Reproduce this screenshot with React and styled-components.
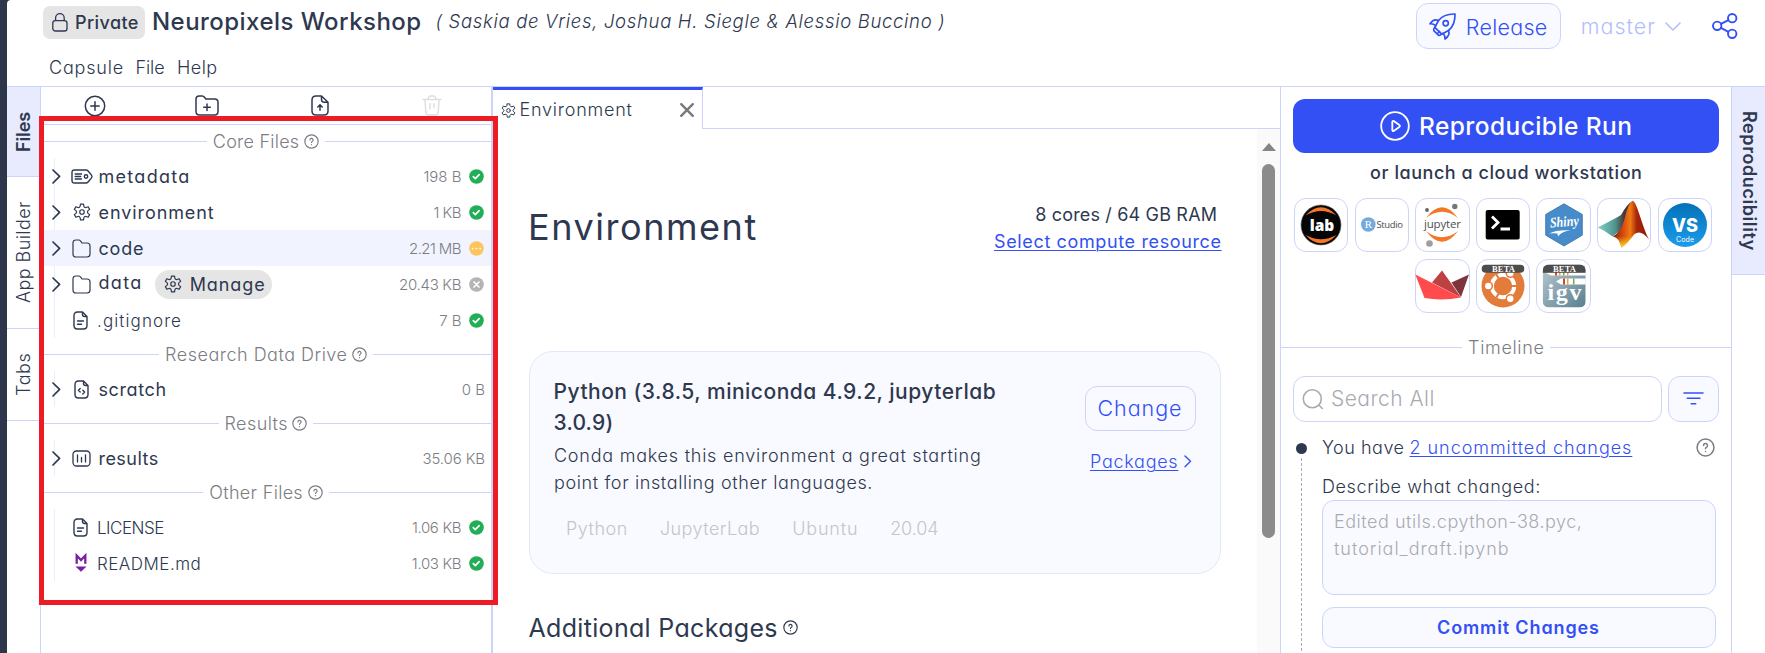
import React from 'react';
import styled, { createGlobalStyle, css } from 'styled-components';

const c = {
  ink: '#2e384f',
  grey: '#7b7d83',
  faint: '#a9abb1',
  blue: '#3350f5',
  line: '#cdd4fb',
  tint: '#f9faff',
  tab: '#e8eafe',
  pill: '#e5e5e5',
  green: '#22ad57',
};

const GlobalStyle = createGlobalStyle`
  *, *::before, *::after { box-sizing: border-box; }
  body {
    margin: 0;
    overflow: hidden;
    background: #fff;
    color: ${c.ink};
    font-family: Inter, "Open Sans", sans-serif;
    font-feature-settings: "cv11";
    font-size: 18px;
    font-weight: 350;
  }
  svg { display: block; flex: none; overflow: visible; }
`;

/* Text with its own tracking; the trailing space is taken back by the margin. */
const Text = styled.span`
  white-space: nowrap;
  letter-spacing: ${(p) => p.$ls || 0}px;
  margin-right: ${(p) => -(p.$ls || 0)}px;
`;

/* ---------- icons ---------- */

const Stroke = styled.svg`
  fill: none;
  stroke: ${(p) => p.$color || c.ink};
  stroke-width: ${(p) => p.$weight || 1.4};
  stroke-linecap: round;
  stroke-linejoin: round;
`;

const gearPath = (() => {
  const pt = (r, deg) => {
    const a = ((deg - 90) * Math.PI) / 180;
    return `${(12 + r * Math.cos(a)).toFixed(2)} ${(12 + r * Math.sin(a)).toFixed(2)}`;
  };
  let d = '';
  for (let k = 0; k < 6; k += 1) {
    const a = k * 60;
    d += `${k ? 'L' : 'M'}${pt(10.8, a - 11)}L${pt(10.8, a + 11)}L${pt(8.2, a + 17)}Q${pt(6.4, a + 30)} ${pt(8.2, a + 43)}`;
  }
  return `${d}Z`;
})();

const Gear = ({ size = 18, weight = 1.6 }) => (
  <Stroke width={size} height={size} viewBox="0 0 24 24" $weight={weight}>
    <path d={gearPath} />
    <circle cx="12" cy="12" r="3" />
  </Stroke>
);

const Help = ({ size = 15, color = c.grey }) => (
  <Stroke width={size} height={size} viewBox="0 0 18 18" $color={color} $weight={1.4}>
    <circle cx="9" cy="9" r="8" />
    <path d="M7.1 7.2a1.9 1.9 0 1 1 2.7 1.7c-.6.3-.8.6-.8 1.3M9 12.7v.1" />
  </Stroke>
);

const Lock = () => (
  <Stroke width="16" height="19" viewBox="0 0 16 19" $weight={1.3}>
    <rect x=".8" y="7.6" width="14.2" height="10.4" rx="2.6" />
    <path d="M3.6 7.4V5a4.3 4.3 0 0 1 8.6 0v2.4" />
  </Stroke>
);

const Chevron = () => (
  <Stroke width="9" height="15" viewBox="0 0 9 15" $weight={1.7}>
    <path d="M1 1l6.6 6.3L1 14" />
  </Stroke>
);

const PlusCircle = () => (
  <Stroke width="22" height="22" viewBox="0 0 22 22" $weight={1.5}>
    <circle cx="11" cy="11" r="9.7" />
    <path d="M11 6.8v8.4M6.8 11h8.4" />
  </Stroke>
);

const FolderPlus = () => (
  <Stroke width="24" height="21" viewBox="0 0 24 21" $weight={1.5}>
    <path d="M1 4.2C1 2 2.2 1 4.2 1h3c1 0 1.7.5 2.3 1.3L10.8 4h8.7C21.8 4 23 5.2 23 7.3v9.2C23 18.8 21.8 20 19.5 20h-15C2.2 20 1 18.8 1 16.5zM12 9v6.6M8.7 12.3h6.6" />
  </Stroke>
);

const FileUp = () => (
  <Stroke width="18" height="21" viewBox="0 0 18 21" $weight={1.5}>
    <path d="M10.5 1H5C2.3 1 1 2.3 1 5v11c0 2.7 1.3 4 4 4h8c2.7 0 4-1.3 4-4V7.2zM10.5 1v3.5c0 2 .7 2.7 2.7 2.7H17M9 15.3V10M6.8 12L9 9.8l2.2 2.2" />
  </Stroke>
);

const Trash = () => (
  <Stroke width="20" height="21" viewBox="0 0 20 21" $color="#dedfe3" $weight={1.5}>
    <path d="M1 4.5h18M6 4.2C6.3 2 7 1 8.5 1h3C13 1 13.7 2 14 4.2M3 4.7l.8 12c.1 2.2 1 3.3 3 3.3h6.4c2 0 2.9-1.1 3-3.3l.8-12M8 8.7v5M12 8.7v3.5" />
  </Stroke>
);

const Tag = () => (
  <Stroke width="22" height="15" viewBox="0 0 22 15" $weight={1.4}>
    <path d="M3.5 1h11.3c1 0 1.7.3 2.3 1l3.4 4.1c.7.9.7 1.9 0 2.8L17.1 13c-.6.7-1.3 1-2.3 1H3.5C1.8 14 1 13.2 1 11.5v-8C1 1.8 1.8 1 3.5 1zM4.2 5h6.3M4.2 7.5h5.5M4.2 10h6.3" />
    <circle cx="15" cy="7.5" r="1.7" />
  </Stroke>
);

const Folder = () => (
  <Stroke width="19" height="19" viewBox="0 0 19 19" $weight={1.2}>
    <path d="M1 4c0-2 1-3 3-3h2.6c1 0 1.6.4 2.1 1.2L10 4h5c2 0 3 1 3 3v8c0 2-1 3-3 3H4c-2 0-3-1-3-3z" />
  </Stroke>
);

const fileOutline = 'M9.5 1h-5C2.2 1 1 2.2 1 4.5v10C1 16.8 2.2 18 4.5 18h6c2.3 0 3.5-1.2 3.5-3.5v-9zM9.5 1v2.5c0 1.5.5 2 2 2H14';

const FileText = () => (
  <Stroke width="15" height="19" viewBox="0 0 15 19" $weight={1.4}>
    <path d={`${fileOutline}M4.5 10h6M4.5 13.3h4`} />
  </Stroke>
);

const FileCode = () => (
  <Stroke width="15" height="19" viewBox="0 0 15 19" $weight={1.4}>
    <path d={`${fileOutline}M6.2 8.5L4.4 10.3l1.8 1.8M8.8 10.3l1.8 1.8-1.8 1.8`} />
  </Stroke>
);

const BarsBox = () => (
  <Stroke width="19" height="17" viewBox="0 0 19 17" $weight={1.3}>
    <rect x="1" y="1" width="17" height="15" rx="3.5" />
    <path d="M5.5 4.8V12M9.5 7.5V12M13.5 4.8V12" />
  </Stroke>
);

const Markdown = () => (
  <svg width="12" height="18" viewBox="0 0 12 18">
    <path d="M1.7 9.8V1.5L6 6l4.3-4.500V9.8" fill="none" stroke="#7b1fa2" strokeWidth="2.3" />
    <path d="M.5 12.5h11L6 17.8z" fill="#7b1fa2" />
  </svg>
);

const statusColor = { ok: c.green, pending: '#fdc55f', ignored: '#b4b4b4' };
const statusPath = {
  ok: 'M4.3 7.7l2 2 3.9-4',
  pending: 'M3.6 7.5h.1M7.4 7.5h.1M11.2 7.5h.1',
  ignored: 'M5 5l5 5M10 5l-5 5',
};
const Status = ({ kind }) => (
  <svg width="15" height="15" viewBox="0 0 15 15">
    <circle cx="7.5" cy="7.5" r="7.3" fill={statusColor[kind]} />
    <path d={statusPath[kind]} fill="none" stroke="#fff" strokeWidth="1.7" strokeLinecap="round" strokeLinejoin="round" />
  </svg>
);

const Rocket = () => (
  <Stroke width="27" height="27" viewBox="0 0 27 27" $color={c.blue} $weight={1.7}>
    <path d="M9.5 7.5C13.5 2.5 19 .8 26 1c.2 7-1.5 12.5-6.5 16.5l-6.8 3.7-6.9-6.9z" />
    <circle cx="16.7" cy="10.3" r="2.6" />
    <path d="M9.5 7.5C6 6 3.8 6.8 1 10.8c2-.3 3.8.2 5.8 1.9M19.5 17.5c1.3 3.2.5 5.7-3.5 8.5.3-2-.2-3.8-1.9-5.8M5.8 14.3c-.9 1-1.5 2.3-1 3.3M9 20l1.5-1.5M12.7 21.2c-1 .9-2.3 1.5-3.3 1l-4.6-4.6" />
  </Stroke>
);

const ChevronDown = () => (
  <Stroke width="16" height="9" viewBox="0 0 16 9" $color="#b3befb" $weight={1.6}>
    <path d="M1 1l7 7 7-7" />
  </Stroke>
);

const Share = () => (
  <Stroke width="26" height="26" viewBox="0 0 26 26" $color={c.blue} $weight={1.9}>
    <circle cx="5.2" cy="12.8" r="4.2" />
    <circle cx="20.2" cy="5.2" r="4.2" />
    <circle cx="20.2" cy="20.8" r="4.2" />
    <path d="M9 10.9l7.4-3.7M9 14.8l7.4 4" />
  </Stroke>
);

const Close = () => (
  <Stroke width="14" height="14" viewBox="0 0 14 14" $color="#77797f" $weight={2.4}>
    <path d="M1.2 1.2l11.6 11.6M12.8 1.2L1.2 12.8" />
  </Stroke>
);

const Play = () => (
  <Stroke width="30" height="30" viewBox="0 0 30 30" $color="#fff" $weight={1.8}>
    <circle cx="15" cy="15" r="13.8" />
    <path d="M12.3 10.9v8.2c0 .9.7 1.2 1.4.8l5.6-4c.8-.5.8-1.3 0-1.8l-5.6-4c-.7-.4-1.4-.1-1.4.8z" />
  </Stroke>
);

const Search = () => (
  <Stroke width="22" height="22" viewBox="0 0 22 22" $color={c.faint} $weight={1.6}>
    <circle cx="10.3" cy="10.8" r="9" />
    <path d="M17.3 17.5l3 3" />
  </Stroke>
);

const Filter = () => (
  <Stroke width="21" height="13" viewBox="0 0 21 13" $color={c.blue} $weight={1.6}>
    <path d="M1 1h19M4.3 6.3h12.6M8.3 11.7h4.4" />
  </Stroke>
);

const SmallChevron = () => (
  <Stroke width="8" height="13" viewBox="0 0 8 13" $color={c.blue} $weight={1.4}>
    <path d="M1 1l5.5 5.3L1 11.8" />
  </Stroke>
);

/* ---------- workstation logos ---------- */

const Logo = ({ children }) => (
  <svg width="54" height="54" viewBox="0 0 54 54">{children}</svg>
);

const LabLogo = () => (
  <Logo>
    <circle cx="27" cy="27" r="20" fill="#060606" stroke="#666" strokeWidth=".6" />
    <path d="M11.5 17.5Q27 1 42.5 17.5Q27 8.5 11.5 17.5zM11.5 37Q27 53.5 42.5 37Q27 45.5 11.5 37z" fill="#f37726" />
    <text x="28" y="32.5" textAnchor="middle" fontFamily="Open Sans, sans-serif" fontWeight="800" fontSize="15.5" fill="#fff">lab</text>
  </Logo>
);

const RStudioLogo = () => (
  <Logo>
    <circle cx="13.3" cy="26.5" r="7.3" fill="#75aadb" />
    <text x="13.3" y="30.2" textAnchor="middle" fontFamily="Liberation Serif, serif" fontSize="11" fill="#fff">R</text>
    <text x="21.5" y="30.2" textLength="26.5" fontFamily="Open Sans, sans-serif" fontWeight="400" fontSize="9.5" fill="#4d4d4d">Studio</text>
  </Logo>
);

const JupyterLogo = () => (
  <Logo>
    <path d="M11 20Q27-1.5 43 20Q27 7.5 11 20zM11 33Q27 54.5 43 33Q27 45.5 11 33z" fill="#f37726" />
    <circle cx="12" cy="12" r="1.9" fill="#616262" />
    <circle cx="39.8" cy="8.5" r="2.7" fill="#767677" />
    <circle cx="14.5" cy="45.5" r="3.3" fill="#9e9e9e" />
    <text x="9" y="30" textLength="37" fontFamily="Open Sans, sans-serif" fontWeight="400" fontSize="11.5" fill="#4e4e4e">jupyter</text>
  </Logo>
);

const TerminalLogo = () => (
  <Logo>
    <rect x="9.7" y="12" width="34" height="29.5" rx="2" fill="#000" />
    <path d="M16 18.5l6 6-6 6M24.5 31h9.5" fill="none" stroke="#fff" strokeWidth="2.8" />
  </Logo>
);

const ShinyLogo = () => (
  <Logo>
    <path d="M27 5.8L45.3 16.4V37.2L27 48L8.7 37.2V16.4z" fill="#478cca" stroke="#3a6fa3" strokeWidth=".8" />
    <text x="27.5" y="28.5" textAnchor="middle" transform="rotate(-4 27 27)" textLength="29" lengthAdjust="spacingAndGlyphs" fontFamily="Liberation Serif, serif" fontStyle="italic" fontWeight="700" fontSize="14.5" fill="#fff">Shiny</text>
    <path d="M12.5 35.5Q20 31.5 34 32.5Q25 33 21 38.5L20.5 35.5Q17 34.8 12.5 35.5z" fill="#fff" />
  </Logo>
);

const MatlabLogo = () => (
  <Logo>
    <defs>
      <linearGradient id="mlFront" x1="0" y1="0" x2="1" y2="0">
        <stop offset="0" stopColor="#7a1d0c" />
        <stop offset=".28" stopColor="#d9480f" />
        <stop offset=".48" stopColor="#f07c13" />
        <stop offset=".66" stopColor="#a8260a" />
        <stop offset="1" stopColor="#8a1a08" />
      </linearGradient>
      <linearGradient id="mlGlow" x1="0" y1="0" x2="0" y2="1">
        <stop offset=".6" stopColor="#ffe21a" stopOpacity="0" />
        <stop offset="1" stopColor="#ffe21a" />
      </linearGradient>
      <linearGradient id="mlBack" x1="0" y1="0" x2="1" y2="0">
        <stop offset="0" stopColor="#84d2c5" />
        <stop offset=".5" stopColor="#4f938e" />
        <stop offset=".75" stopColor="#473636" />
      </linearGradient>
    </defs>
    <path d="M.8 29.5L16 21.5Q20 19.5 24 17Q30 6 36 2.8L28 29L15.5 38.5Q8 32.5 .8 29.5z" fill="url(#mlBack)" />
    <path d="M16 38.5Q24 34 27.5 21Q31 5 35.8 2.8C40 4 45 28 52 41.5Q44 31 37.5 36Q30 46 24.5 49.5Q21.5 39 16 38.5z" fill="url(#mlFront)" />
    <path d="M16 38.5Q24 34 27.5 21L35 24L37.5 36Q30 46 24.5 49.5Q21.5 39 16 38.5z" fill="url(#mlGlow)" />
  </Logo>
);

const VSCodeLogo = () => (
  <Logo>
    <defs>
      <linearGradient id="vs" x1="0" y1="0" x2="0" y2="1">
        <stop offset="0" stopColor="#0471b9" />
        <stop offset="1" stopColor="#1c9cea" />
      </linearGradient>
    </defs>
    <circle cx="27" cy="27" r="22" fill="url(#vs)" />
    <text x="27" y="33.5" textAnchor="middle" textLength="26" lengthAdjust="spacingAndGlyphs" fontWeight="800" fontSize="19" fill="#fff">VS</text>
    <text x="27" y="43.5" textAnchor="middle" textLength="18" fontSize="7" fontWeight="400" fill="#fff">Code</text>
  </Logo>
);

const StreamlitLogo = () => (
  <Logo>
    <path d="M27 11.5L37 25.5L46 38.5L17 23.5z" fill="#bd4043" />
    <path d="M54 15.5L46 38L36.5 23.5z" fill="#7d353b" />
    <path d="M.3 15.5L46 38.5Q27 42 9.5 39z" fill="#ff4b4b" />
  </Logo>
);

const UbuntuLogo = () => (
  <Logo>
    <circle cx="27" cy="27" r="21.5" fill="#e37b3b" />
    <circle cx="27" cy="27" r="11.2" fill="none" stroke="#fff" strokeWidth="4" />
    <path d="M27 27l17 0M27 27L18.5 12.3M27 27L18.5 41.7" stroke="#e37b3b" strokeWidth="2" />
    <circle cx="27" cy="27" r="8" fill="#e37b3b" />
    <g fill="#fff" stroke="#e37b3b" strokeWidth="1.6">
      <circle cx="12.3" cy="27" r="4" />
      <circle cx="34.3" cy="14.3" r="4" />
      <circle cx="34.3" cy="39.7" r="4" />
    </g>
    <rect x="5.7" y="5.7" width="42.6" height="8" rx="4" fill="#4c4c4c" />
    <text x="27.5" y="12.8" textAnchor="middle" textLength="23" fontFamily="Liberation Serif, serif" fontWeight="700" fontSize="8.5" fill="#fff">BETA</text>
  </Logo>
);

const IgvLogo = () => (
  <Logo>
    <defs>
      <linearGradient id="igv" x1="0" y1="0" x2="1" y2="1">
        <stop offset="0" stopColor="#b9c9d0" />
        <stop offset="1" stopColor="#587f91" />
      </linearGradient>
      <clipPath id="igvBox"><rect x="5.7" y="5.5" width="43" height="43" rx="6" /></clipPath>
    </defs>
    <g clipPath="url(#igvBox)">
      <rect x="5.7" y="5.5" width="43" height="43" fill="url(#igv)" />
      <path d="M9 14l5 2.5h35v-4H12zM19 22.5l5-3h25v6H24z" fill="#fff" />
      <path d="M18 13h2v3.5h-2zM26 19.5h2v6h-2z" fill="#d9432f" />
      <path d="M22 13h1.5v3.5H22zM30 13h1.5v3.5H30zM30 19.5h1.5v6H30z" fill="#e9a33b" />
      <path d="M26 13h1.5v3.5H26zM36 19.5h1.5v6H36z" fill="#72a84e" />
      <rect x="5.7" y="5.5" width="43" height="8.3" fill="#4c4c4c" />
    </g>
    <text x="27.5" y="12.8" textAnchor="middle" textLength="23" fontFamily="Liberation Serif, serif" fontWeight="700" fontSize="8.5" fill="#fff">BETA</text>
    <text x="27.5" y="41" textAnchor="middle" textLength="34" fontFamily="Liberation Serif, serif" fontWeight="700" fontSize="24" fill="#fff">igv</text>
  </Logo>
);

/* ---------- frame ---------- */

const Window = styled.div`
  position: relative;
  display: flex;
  width: 1765px;
  height: 653px;
  overflow: hidden;
  background: #2e364b;
`;

const Page = styled.div`
  flex: 1;
  display: flex;
  flex-direction: column;
  margin-left: 7px;
  background: #fff;
  border-top-left-radius: 4px;
`;

const Header = styled.header`
  display: flex;
  justify-content: space-between;
  height: 87px;
  padding: 0 27px 0 36px;
  border-bottom: 1px solid ${c.line};
`;

const HeaderLeft = styled.div`
  display: flex;
  flex-direction: column;
`;

const TitleRow = styled.div`
  display: flex;
  align-items: center;
  height: 33px;
  margin-top: 6px;
`;

const PrivateBadge = styled.div`
  display: flex;
  align-items: center;
  gap: 7px;
  width: 102px;
  height: 33px;
  padding-left: 9px;
  border-radius: 7px;
  background: ${c.pill};
  font-weight: 500;
`;

const Title = styled.h1`
  margin: 0 0 2px 7px;
  font-size: 24px;
  font-weight: 500;
  line-height: 30px;
`;

const Authors = styled.div`
  margin: -3px 0 0 14.5px;
  font-size: 18.5px;
  font-style: italic;
`;

const MenuBar = styled.nav`
  display: flex;
  gap: 12.5px;
  padding: 17.5px 0 0 6px;
  line-height: 22px;
`;

const HeaderActions = styled.div`
  display: flex;
  align-items: flex-start;
  font-size: 21.5px;
`;

const ReleaseButton = styled.button`
  display: flex;
  align-items: center;
  gap: 10px;
  width: 145px;
  height: 46px;
  margin-top: 3px;
  padding: 1px 0 0 12px;
  border: 1px solid ${c.line};
  border-radius: 12px;
  background: ${c.tint};
  color: ${c.blue};
  font: inherit;
`;

const Branch = styled.div`
  display: flex;
  align-items: center;
  gap: 10px;
  height: 52px;
  margin-left: 20px;
  color: #b3befb;
`;

const ShareButton = styled.div`
  margin: 13px 0 0 31px;
`;

const Body = styled.div`
  flex: 1;
  display: flex;
  min-height: 0;
`;

/* ---------- side tabs ---------- */

const Rail = styled.div`
  display: flex;
  flex-direction: column;
  flex: none;
  width: 34px;
  ${(p) => (p.$right
    ? css`border-left: 1px solid ${c.line};`
    : css`border-right: 1px solid ${c.line};`)}
`;

const RailTab = styled.div`
  display: flex;
  align-items: center;
  justify-content: center;
  height: ${(p) => p.$h}px;
  border-bottom: 1px solid ${c.line};
  writing-mode: vertical-rl;
  transform: ${(p) => (p.$flip ? 'rotate(180deg)' : 'none')};
  ${(p) => p.$flip && css`border-bottom: 0; border-top: 1px solid ${c.line};`}
  background: ${(p) => (p.$active ? c.tab : 'transparent')};
  font-weight: ${(p) => (p.$active ? 580 : 350)};
`;

const RailText = styled.span`
  white-space: nowrap;
  letter-spacing: ${(p) => p.$ls}px;
  line-height: 24px;
`;

/* ---------- file panel ---------- */

const FilePanel = styled.aside`
  flex: none;
  width: 452px;
  border-right: 2px solid ${c.line};
`;

const Toolbar = styled.div`
  display: grid;
  grid-template-columns: 107px 117px 110px 114px;
  place-items: center;
  height: 38px;
  border-bottom: 1px solid ${c.line};
`;

const ToolSlot = styled.div`
  display: flex;
`;

const Divider = styled.div`
  display: flex;
  align-items: center;
  gap: 6px;
  height: 33px;
  color: ${c.grey};
  &::before, &::after {
    content: '';
    flex: 1;
    height: 1px;
    background: ${c.line};
  }
`;

const DividerLabel = styled.div`
  display: flex;
  align-items: center;
  gap: 5px;
`;

const Tree = styled.div`
  display: flex;
  flex-direction: column;
  background: linear-gradient(#ecedfa, #ecedfa) 13px 0 / 1px 100% no-repeat;
`;

const Row = styled.div`
  display: flex;
  align-items: center;
  height: 36px;
  padding-left: 11px;
  padding-right: ${(p) => (p.$tracked ? 7.5 : 6)}px;
  background: ${(p) => (p.$selected ? '#f1f4fe' : 'transparent')};
`;

const Arrow = styled.div`
  width: 9px;
`;

const FileIcon = styled.div`
  display: flex;
  justify-content: center;
  width: 22px;
  margin-left: ${(p) => (p.$folder ? 9.5 : 8.5)}px;
`;

const FileName = styled(Text)`
  margin-left: ${(p) => (p.$folder ? 6 : 5.5)}px;
  padding-top: 1px;
  font-weight: ${(p) => (p.$folder ? 430 : 350)};
  font-size: ${(p) => (p.$folder ? 18 : 17)}px;
  ${(p) => p.$raised && css`padding: 0 0 3px;`}
`;

const FileSize = styled(Text)`
  margin-left: auto;
  font-size: 15px;
  color: ${c.grey};
`;

const StatusSlot = styled.div`
  margin-left: 7px;
`;

const ManageButton = styled.div`
  display: flex;
  align-items: center;
  gap: 8px;
  width: 117px;
  height: 29px;
  margin-left: 13.5px;
  padding-left: 9px;
  border-radius: 15px;
  background: ${c.pill};
  font-weight: 400;
`;

const Highlight = styled.div`
  position: absolute;
  left: 39px;
  top: 116px;
  width: 459px;
  height: 489px;
  border: 5px solid #ed1c24;
`;

/* ---------- editor ---------- */

const Editor = styled.main`
  flex: 1;
  display: flex;
  flex-direction: column;
  min-width: 0;
`;

const TabStrip = styled.div`
  display: flex;
  height: 42px;
  &::after {
    content: '';
    flex: 1;
    border-bottom: 1px solid ${c.line};
  }
`;

const Tab = styled.div`
  display: flex;
  align-items: center;
  width: 210px;
  padding: 1px 8px 0 8px;
  border-top: 3px solid ${c.blue};
  border-right: 1px solid ${c.line};
`;

const TabName = styled(Text)`
  flex: 1;
  margin-left: 3.5px;
  padding-bottom: 1px;
`;

const EditorBody = styled.div`
  flex: 1;
  display: flex;
  min-height: 0;
`;

const Content = styled.div`
  flex: 1;
  padding: 72px 36px 0;
`;

const ContentHead = styled.div`
  display: flex;
  justify-content: space-between;
  height: 150px;
`;

const Heading = styled.h2`
  margin: 4px 0 0 -1px;
  font-size: 36px;
  font-weight: 430;
  line-height: 44px;
`;

const Compute = styled.div`
  display: flex;
  flex-direction: column;
  align-items: flex-end;
  font-weight: 400;
  line-height: 27px;
`;

const ComputeSpec = styled(Text)`
  padding-right: 4px;
`;

const Link = styled(Text)`
  color: ${c.blue};
  text-decoration: underline;
  text-decoration-thickness: 1px;
  text-underline-offset: 2px;
`;

const Card = styled.section`
  display: flex;
  justify-content: space-between;
  height: 223px;
  padding: 25px 24px 0;
  border: 1px solid #e3e7fc;
  border-radius: 24px;
  background: ${c.tint};
`;

const CardInfo = styled.div`
  display: flex;
  flex-direction: column;
  align-items: flex-start;
`;

const CardTitle = styled(Text)`
  margin-left: -0.5px;
  font-size: 21px;
  font-weight: 530;
  line-height: 30.5px;
`;

const CardText = styled(Text)`
  line-height: 27px;
`;

const Description = styled.div`
  display: flex;
  flex-direction: column;
  align-items: flex-start;
  margin-top: 4px;
`;

const Tags = styled.div`
  display: flex;
  gap: 32.5px;
  margin: 19px 0 0 12px;
  color: #c3c5ca;
  line-height: 27px;
`;

const CardActions = styled.div`
  display: flex;
  flex-direction: column;
  align-items: flex-start;
  width: 111px;
  padding-top: 9px;
`;

const ChangeButton = styled.button`
  width: 111px;
  height: 45px;
  padding: 0 2px 1px 0;
  border: 1px solid ${c.line};
  border-radius: 12px;
  background: ${c.tint};
  color: ${c.blue};
  font: inherit;
  font-size: 21.5px;
`;

const PackagesLink = styled.div`
  display: flex;
  align-items: center;
  gap: 6.5px;
  margin: 20px 0 0 5px;
`;

const Section = styled.h3`
  display: flex;
  align-items: center;
  gap: 5.5px;
  margin: 36.5px 0 0 -0.5px;
  font-size: 25px;
  font-weight: 400;
  line-height: 34px;
`;

const ScrollTrack = styled.div`
  display: flex;
  flex-direction: column;
  align-items: center;
  gap: 13px;
  width: 23px;
  padding-top: 14px;
  background: #fafafa;
`;

const ScrollArrow = styled.div`
  border: 7px solid transparent;
  border-top: 0;
  border-bottom: 8px solid #858585;
`;

const ScrollThumb = styled.div`
  width: 13px;
  height: 374px;
  border-radius: 7px;
  background: #8b8b8b;
`;

/* ---------- reproducibility panel ---------- */

const RunPanel = styled.aside`
  flex: none;
  display: flex;
  flex-direction: column;
  width: 451px;
  padding-top: 12px;
  border-left: 1px solid ${c.line};
`;

const RunButton = styled.button`
  display: flex;
  align-items: center;
  justify-content: center;
  gap: 9px;
  flex: none;
  height: 54px;
  margin: 0 12px;
  padding: 0 6px 1px;
  border: 0;
  border-radius: 12px;
  background: ${c.blue};
  color: #fff;
  font: inherit;
  font-size: 24.5px;
  font-weight: 500;
`;

const Launch = styled.div`
  display: flex;
  justify-content: center;
  padding: 8px 0 14px;
  line-height: 23px;
  font-weight: 500;
`;

const Tiles = styled.div`
  display: flex;
  flex-wrap: wrap;
  justify-content: center;
  gap: 6.2px;
  padding: 0 18px 0 12px;
`;

const Tile = styled.div`
  display: flex;
  align-items: center;
  justify-content: center;
  width: 54.4px;
  height: 54.4px;
  border: 1px solid ${c.line};
  border-radius: 12px;
`;

const TimelineDivider = styled(Divider)`
  height: 34px;
  margin-top: 17.5px;
`;

const SearchRow = styled.div`
  display: flex;
  gap: 6px;
  margin: 11.5px 12px 0;
`;

const SearchBox = styled.div`
  flex: 1;
  display: flex;
  align-items: center;
  gap: 7px;
  height: 46px;
  padding-left: 8px;
  border: 1px solid ${c.line};
  border-radius: 12px;
  color: ${c.faint};
  font-size: 21px;
`;

const FilterButton = styled.button`
  display: flex;
  align-items: center;
  justify-content: center;
  width: 51px;
  height: 46px;
  border: 1px solid ${c.line};
  border-radius: 12px;
  background: ${c.tint};
`;

const Timeline = styled.div`
  flex: 1;
  display: flex;
  gap: 15px;
  min-height: 0;
  margin: 11px 15px 0 15px;
`;

const Track = styled.div`
  display: flex;
  flex-direction: column;
  align-items: center;
  width: 11px;
  padding-top: 10px;
`;

const Dot = styled.div`
  flex: none;
  width: 11px;
  height: 11px;
  margin-bottom: 4px;
  border-radius: 50%;
  background: ${c.ink};
`;

const Dashes = styled.div`
  flex: 1;
  width: 1px;
  background: repeating-linear-gradient(#a9abb1 0 3px, transparent 3px 5px);
`;

const Entry = styled.div`
  flex: 1;
  display: flex;
  flex-direction: column;
`;

const EntryHead = styled.div`
  display: flex;
  align-items: center;
  height: 29px;
  padding-right: 1.5px;
`;

const HelpSlot = styled.div`
  margin-left: auto;
`;

const FieldLabel = styled.div`
  padding: 13px 0 1.5px;
  line-height: 24px;
`;

const MessageBox = styled.div`
  display: flex;
  flex-direction: column;
  align-items: flex-start;
  flex: none;
  height: 95px;
  padding: 6.5px 11px;
  border: 1px solid ${c.line};
  border-radius: 12px;
  background: ${c.tint};
  color: ${c.faint};
  line-height: 27px;
`;

const CommitButton = styled.button`
  flex: none;
  height: 41px;
  margin-top: 12px;
  padding: 0 2px 1px 0;
  border: 1px solid ${c.line};
  border-radius: 12px;
  background: ${c.tint};
  color: ${c.blue};
  font: inherit;
  font-weight: 600;
`;

/* ---------- data ---------- */

const groups = [
  {
    label: 'Core Files', ls: 0.24,
    files: [
      { name: 'metadata', ls: 1.3, icon: <Tag />, folder: true, size: '198 B', sls: 0, status: 'ok' },
      { name: 'environment', ls: 0.92, icon: <Gear />, folder: true, size: '1 KB', sls: -0.5, status: 'ok' },
      { name: 'code', ls: 0.8, icon: <Folder />, folder: true, size: '2.21 MB', sls: -0.6, status: 'pending', selected: true },
      { name: 'data', ls: 1.3, icon: <Folder />, folder: true, manage: true, size: '20.43 KB', sls: -0.3, status: 'ignored' },
      { name: '.gitignore', ls: 1.1, icon: <FileText />, size: '7 B', sls: 0, status: 'ok' },
    ],
  },
  {
    label: 'Research Data Drive', ls: 0.5,
    files: [{ name: 'scratch', ls: 0.6, icon: <FileCode />, folder: true, size: '0 B', sls: 0 }],
  },
  {
    label: 'Results', ls: 0.4,
    files: [{ name: 'results', ls: 0.45, icon: <BarsBox />, folder: true, size: '35.06 KB', sls: -0.12 }],
  },
  {
    label: 'Other Files', ls: 0.3,
    files: [
      { name: 'LICENSE', ls: -0.5, icon: <FileText />, size: '1.06 KB', sls: -0.35, status: 'ok' },
      { name: 'README.md', ls: 0.48, icon: <Markdown />, size: '1.03 KB', sls: -0.35, status: 'ok' },
    ],
  },
];

const workstations = [
  ['lab', LabLogo], ['rstudio', RStudioLogo], ['jupyter', JupyterLogo],
  ['terminal', TerminalLogo], ['shiny', ShinyLogo], ['matlab', MatlabLogo],
  ['vscode', VSCodeLogo], ['streamlit', StreamlitLogo], ['ubuntu', UbuntuLogo],
  ['igv', IgvLogo],
];

const FileRow = ({ file }) => (
  <Row $selected={file.selected} $tracked={Boolean(file.status)}>
    <Arrow>{file.folder && <Chevron />}</Arrow>
    <FileIcon $folder={file.folder}>{file.icon}</FileIcon>
    <FileName $ls={file.ls} $folder={file.folder} $raised={file.manage}>{file.name}</FileName>
    {file.manage && (
      <ManageButton>
        <Gear />
        <Text $ls={0.9}>Manage</Text>
      </ManageButton>
    )}
    <FileSize $ls={file.sls}>{file.size}</FileSize>
    {file.status && <StatusSlot><Status kind={file.status} /></StatusSlot>}
  </Row>
);

export default function App() {
  return (
    <Window>
      <GlobalStyle />
      <Page>
        <Header>
          <HeaderLeft>
            <TitleRow>
              <PrivateBadge><Lock /><Text $ls={0.4}>Private</Text></PrivateBadge>
              <Title><Text $ls={0.46}>Neuropixels Workshop</Text></Title>
              <Authors><Text $ls={0.68}>( Saskia de Vries, Joshua H. Siegle &amp; Alessio Buccino )</Text></Authors>
            </TitleRow>
            <MenuBar>
              <Text $ls={0.8}>Capsule</Text>
              <Text $ls={-0.15}>File</Text>
              <Text $ls={0.4}>Help</Text>
            </MenuBar>
          </HeaderLeft>
          <HeaderActions>
            <ReleaseButton><Rocket /><Text $ls={0.28}>Release</Text></ReleaseButton>
            <Branch><Text $ls={1.0}>master</Text><ChevronDown /></Branch>
            <ShareButton><Share /></ShareButton>
          </HeaderActions>
        </Header>
        <Body>
          <Rail>
            <RailTab $h={90} $flip $active><RailText $ls={-0.1}>Files</RailText></RailTab>
            <RailTab $h={152} $flip><RailText $ls={0.42}>App Builder</RailText></RailTab>
            <RailTab $h={92} $flip><RailText $ls={0.6}>Tabs</RailText></RailTab>
          </Rail>
          <FilePanel>
            <Toolbar>
              <ToolSlot><PlusCircle /></ToolSlot>
              <ToolSlot><FolderPlus /></ToolSlot>
              <ToolSlot><FileUp /></ToolSlot>
              <ToolSlot><Trash /></ToolSlot>
            </Toolbar>
            {groups.map((group) => (
              <React.Fragment key={group.label}>
                <Divider>
                  <DividerLabel><Text $ls={group.ls}>{group.label}</Text><Help /></DividerLabel>
                </Divider>
                <Tree>
                  {group.files.map((file) => <FileRow key={file.name} file={file} />)}
                </Tree>
              </React.Fragment>
            ))}
          </FilePanel>
          <Editor>
            <TabStrip>
              <Tab>
                <Gear size={15} weight={1.6} />
                <TabName $ls={0.76}>Environment</TabName>
                <Close />
              </Tab>
            </TabStrip>
            <EditorBody>
              <Content>
                <ContentHead>
                  <Heading><Text $ls={1.55}>Environment</Text></Heading>
                  <Compute>
                    <ComputeSpec $ls={0.17}>8 cores / 64 GB RAM</ComputeSpec>
                    <Link $ls={0.63}>Select compute resource</Link>
                  </Compute>
                </ContentHead>
                <Card>
                  <CardInfo>
                    <CardTitle $ls={0.5}>Python (3.8.5, miniconda 4.9.2, jupyterlab</CardTitle>
                    <CardTitle $ls={0.2}>3.0.9)</CardTitle>
                    <Description>
                      <CardText $ls={0.76}>Conda makes this environment a great starting</CardText>
                      <CardText $ls={0.62}>point for installing other languages.</CardText>
                    </Description>
                    <Tags>
                      <Text $ls={0.52}>Python</Text>
                      <Text $ls={0.45}>JupyterLab</Text>
                      <Text $ls={0.85}>Ubuntu</Text>
                      <Text $ls={-0.1}>20.04</Text>
                    </Tags>
                  </CardInfo>
                  <CardActions>
                    <ChangeButton><Text $ls={0.95}>Change</Text></ChangeButton>
                    <PackagesLink><Link $ls={0.72}>Packages</Link><SmallChevron /></PackagesLink>
                  </CardActions>
                </Card>
                <Section><Text $ls={0.32}>Additional Packages</Text><Help color={c.ink} /></Section>
              </Content>
              <ScrollTrack><ScrollArrow /><ScrollThumb /></ScrollTrack>
            </EditorBody>
          </Editor>
          <RunPanel>
            <RunButton><Play /><Text $ls={0.42}>Reproducible Run</Text></RunButton>
            <Launch><Text $ls={0.55}>or launch a cloud workstation</Text></Launch>
            <Tiles>
              {workstations.map(([name, Station]) => <Tile key={name}><Station /></Tile>)}
            </Tiles>
            <TimelineDivider><Text $ls={0.65}>Timeline</Text></TimelineDivider>
            <SearchRow>
              <SearchBox><Search /><Text $ls={0.45}>Search All</Text></SearchBox>
              <FilterButton><Filter /></FilterButton>
            </SearchRow>
            <Timeline>
              <Track><Dot /><Dashes /></Track>
              <Entry>
                <EntryHead>
                  <Text $ls={0.5}>You have&nbsp;</Text>
                  <Link $ls={0.95}>2 uncommitted changes</Link>
                  <HelpSlot><Help size={19} /></HelpSlot>
                </EntryHead>
                <FieldLabel><Text $ls={0.6}>Describe what changed:</Text></FieldLabel>
                <MessageBox>
                  <Text $ls={0.52}>Edited utils.cpython-38.pyc,</Text>
                  <Text $ls={0.98}>tutorial_draft.ipynb</Text>
                </MessageBox>
                <CommitButton><Text $ls={0.87}>Commit Changes</Text></CommitButton>
              </Entry>
            </Timeline>
          </RunPanel>
          <Rail $right>
            <RailTab $h={188} $active><RailText $ls={0.58}>Reproducibility</RailText></RailTab>
          </Rail>
        </Body>
      </Page>
      <Highlight />
    </Window>
  );
}
